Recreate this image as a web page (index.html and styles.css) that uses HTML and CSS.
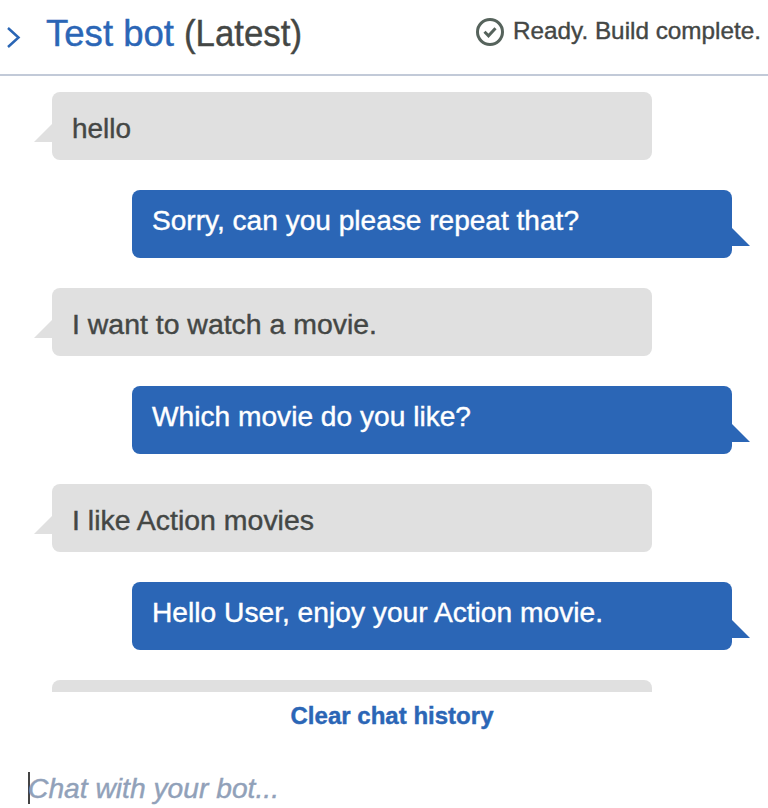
FILE: index.html
```html
<!DOCTYPE html>
<html lang="en">
<head>
<meta charset="utf-8">
<title>Test bot</title>
<link rel="stylesheet" href="styles.css">
</head>
<body>
<header class="header">
  <svg class="chevron" viewBox="0 0 16 24"><path d="M2 3l10.500 9.500L2 22"/></svg>
  <h1 class="title"><svg class="fit" width="128" height="44"><text class="name" x="0" y="33" textLength="128" lengthAdjust="spacingAndGlyphs">Test bot</text></svg><svg class="fit latest" width="119" height="44"><text x="0" y="33" textLength="118" lengthAdjust="spacingAndGlyphs">(Latest)</text></svg></h1>
  <div class="status">
    <svg class="check" viewBox="0 0 28 28"><circle cx="14" cy="14" r="12.500"/><path d="M8.500 13.800l4 4 7-7.500"/></svg>
    <svg class="fit status-text" width="248" height="36"><text x="-1" y="23.500" textLength="248" lengthAdjust="spacingAndGlyphs">Ready. Build complete.</text></svg>
  </div>
</header>
<main class="chat">
  <div class="bubble user"><svg class="fit" width="60" height="40"><text x="0" y="28" textLength="59" lengthAdjust="spacingAndGlyphs">hello</text></svg></div>
  <div class="bubble bot"><svg class="fit" width="428" height="40"><text x="0" y="28" textLength="427" lengthAdjust="spacingAndGlyphs">Sorry, can you please repeat that?</text></svg></div>
  <div class="bubble user"><svg class="fit" width="306" height="40"><text x="0" y="28" textLength="305" lengthAdjust="spacingAndGlyphs">I want to watch a movie.</text></svg></div>
  <div class="bubble bot"><svg class="fit" width="320" height="40"><text x="0" y="28" textLength="319" lengthAdjust="spacingAndGlyphs">Which movie do you like?</text></svg></div>
  <div class="bubble user"><svg class="fit" width="243" height="40"><text x="0" y="28" textLength="242" lengthAdjust="spacingAndGlyphs">I like Action movies</text></svg></div>
  <div class="bubble bot"><svg class="fit" width="452" height="40"><text x="0" y="28" textLength="451" lengthAdjust="spacingAndGlyphs">Hello User, enjoy your Action movie.</text></svg></div>
  <div class="bubble user"></div>
</main>
<div class="clear"><svg class="fit" width="203" height="36"><text x="-0.500" y="24" textLength="203" lengthAdjust="spacingAndGlyphs">Clear chat history</text></svg></div>
<footer class="composer"><span class="caret"></span><svg class="fit" width="256" height="40"><text x="-1" y="28" textLength="251" lengthAdjust="spacingAndGlyphs">Chat with your bot...</text></svg></footer>
</body>
</html>
```
FILE: styles.css
```css
* { box-sizing: border-box; }
body { margin: 0; width: 768px; height: 808px; overflow: hidden; background: #fff; color: #444745; font-family: "Liberation Sans", Arial, sans-serif; }
.fit { display: block; overflow: visible; fill: currentColor; stroke: currentColor; stroke-width: 0.400; flex: none; }
.header { display: flex; height: 76px; border-bottom: 2px solid #c2cad8; }
.chevron { width: 16px; height: 24px; margin: 25px 0 0 6px; fill: none; stroke: #2a66b5; stroke-width: 2.500; }
.title { display: flex; margin: 13px 0 0 24px; font-size: 36px; font-weight: 400; }
.name { fill: #2b66b6; stroke: #2b66b6; }
.latest { margin-left: 10px; }
.status { display: flex; margin: 15px 6px 0 auto; font-size: 24.500px; }
.check { width: 28px; height: 28px; margin: 3px 10px 0 0; fill: none; stroke: #56635c; stroke-width: 3; }
.chat { display: flex; flex-direction: column; gap: 30px; height: 616px; padding: 16px 36px 0 52px; overflow: hidden; }
.bubble { position: relative; flex: none; width: 600px; height: 68px; padding: 18px 20px; border-radius: 8px; font-size: 27px; }
.user { background: #e0e0e0; }
.bot { align-self: flex-end; padding-top: 12px; background: #2b66b6; color: #fff; }
.bubble::after { content: ""; position: absolute; top: 32px; width: 18px; height: 18px; }
.user::after { left: -18px; background: #e0e0e0; clip-path: polygon(100% 0, 100% 100%, 0 100%); }
.bot::after { right: -18px; top: 38px; background: #2b66b6; clip-path: polygon(0 0, 100% 100%, 0 100%); }
.clear { display: flex; justify-content: center; margin-top: 8px; padding-left: 16px; height: 36px; font-size: 24px; font-weight: 700; color: #2b66b6; }
.composer { display: flex; margin: 34px 0 0 28px; font-size: 27px; font-style: italic; color: #91a1b9; }
.caret { width: 2px; height: 32px; margin-top: 2px; background: #444; margin-right: -1px; }
```
